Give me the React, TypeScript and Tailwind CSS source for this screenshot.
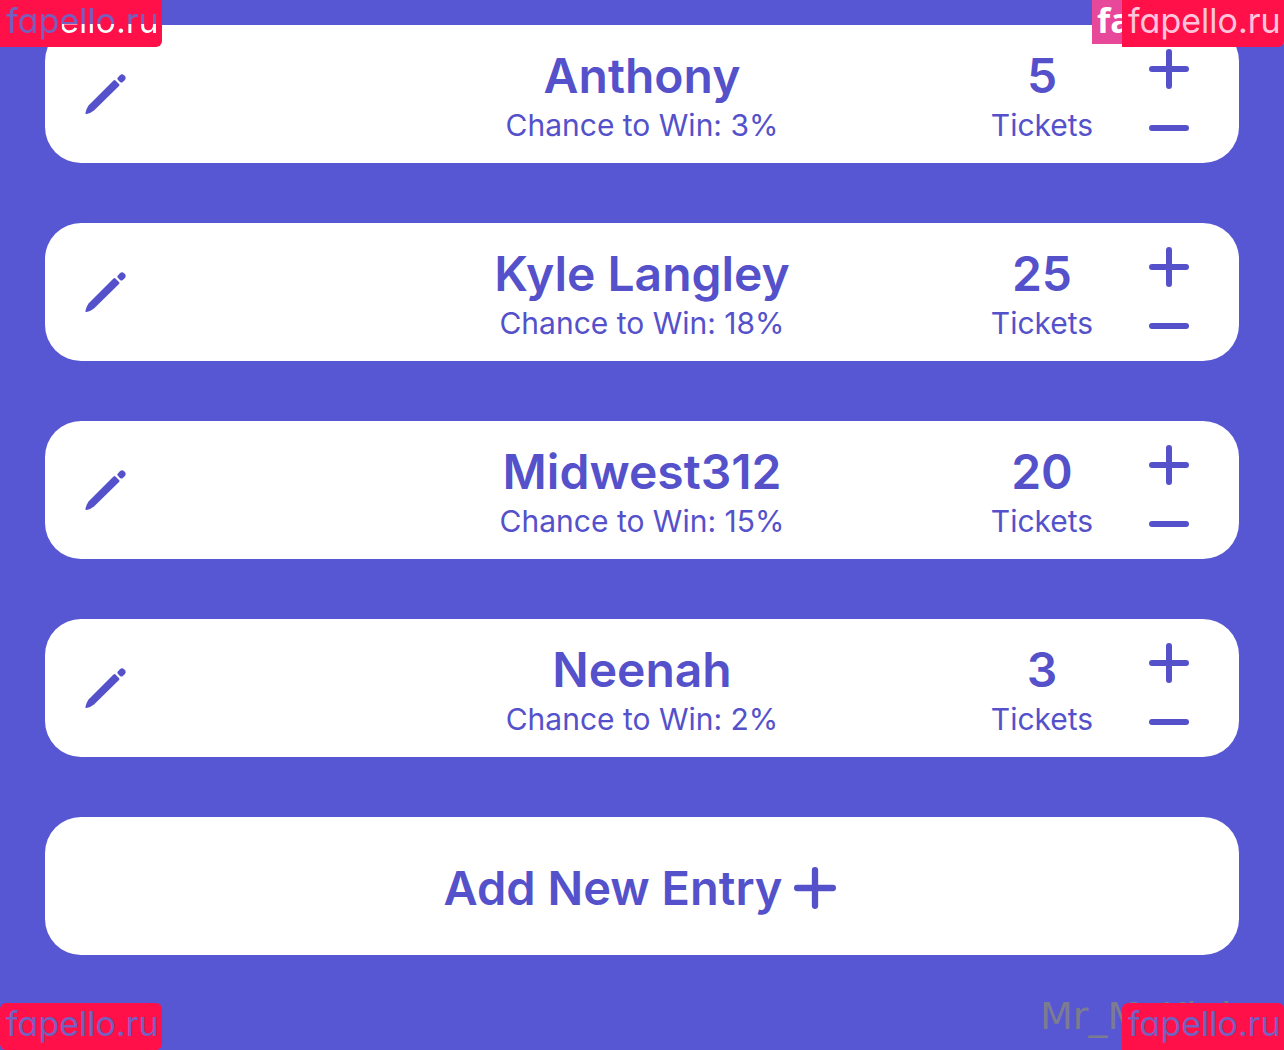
import type { ReactNode } from "react";

type Entry = {
  name: string;
  chance: number;
  tickets: number;
};

const entries: Entry[] = [
  { name: "Anthony", chance: 3, tickets: 5 },
  { name: "Kyle Langley", chance: 18, tickets: 25 },
  { name: "Midwest312", chance: 15, tickets: 20 },
  { name: "Neenah", chance: 2, tickets: 3 },
];

function PencilIcon() {
  return (
    <svg viewBox="0 0 42 42" className="h-[42px] w-[42px]" fill="currentColor" aria-hidden="true">
      <path d="M1.500 41 Q0 41.200 .5 39.500 Q1.500 35.500 3.500 32.500 L28.500 7.500 Q29.500 6.500 30.500 7.500 L34 11 Q35 12 34 13 L9 37.500 Q6 40 1.500 41 Z" />
      <path d="M32.800 4.500 L35 2.200 Q37 .5 39 2.200 L40 3.200 Q41.500 5 40 7 L37.800 9 Q36.500 10 35 9 L32.800 6.800 Q31.800 5.600 32.800 4.500 Z" />
    </svg>
  );
}

function PlusIcon({ className }: { className: string }) {
  return (
    <svg viewBox="0 0 40 40" className={className} fill="none" stroke="currentColor" strokeWidth="6" strokeLinecap="round" aria-hidden="true">
      <path d="M20 3 V37 M3 20 H37" />
    </svg>
  );
}

function MinusIcon() {
  return (
    <svg viewBox="0 0 40 6" className="h-[6px] w-10" fill="none" stroke="currentColor" strokeWidth="6" strokeLinecap="round" aria-hidden="true">
      <path d="M3 3 H37" />
    </svg>
  );
}

function EntryCard({ entry }: { entry: Entry }) {
  return (
    <li className="grid h-[138px] grid-cols-[1fr_auto_1fr] rounded-[36px] bg-white px-10">
      <button type="button" aria-label={`Edit ${entry.name}`} className="self-center justify-self-start">
        <PencilIcon />
      </button>

      <div className="flex flex-col items-center pt-5 text-center">
        <h2 className="text-[48px] leading-[62px] font-semibold">{entry.name}</h2>
        <p className="text-[30px] leading-9">Chance to Win: {entry.chance}%</p>
      </div>

      <div className="flex justify-end gap-12">
        <div className="flex w-[118px] flex-col items-center pt-5">
          <span className="text-[48px] leading-[62px] font-semibold">{entry.tickets}</span>
          <span className="text-[30px] leading-9">Tickets</span>
        </div>
        <div className="mr-[10px] flex flex-col pt-6">
          <button type="button" aria-label={`Add ticket for ${entry.name}`}>
            <PlusIcon className="h-10 w-10" />
          </button>
          <button type="button" aria-label={`Remove ticket for ${entry.name}`} className="mt-9">
            <MinusIcon />
          </button>
        </div>
      </div>
    </li>
  );
}

function Tag({ className, children }: { className: string; children: ReactNode }) {
  return (
    <div className={`absolute h-[47px] w-[162px] bg-[#ff1048] pl-[6px] text-[34px] leading-[42px] whitespace-nowrap [font-feature-settings:'cv11'] ${className}`}>
      {children}
    </div>
  );
}

export default function App() {
  return (
    <div className="relative overflow-hidden bg-[#5756d3] font-[Inter,sans-serif] text-[#5451cb]">
      <main className="px-[45px] pt-[25px] pb-[95px]">
        <ul className="flex flex-col gap-[60px]">
          {entries.map((entry) => (
            <EntryCard key={entry.name} entry={entry} />
          ))}
        </ul>
        <button type="button" className="mt-[60px] flex h-[138px] w-full items-center justify-center gap-3 rounded-[36px] bg-white pt-1 pr-1 text-[47px] font-semibold">
          Add New Entry
          <PlusIcon className="h-[42px] w-[42px]" />
        </button>
      </main>

      <Tag className="top-0 left-0 rounded-br-md">
        <span className="bg-[#7560c0] bg-[linear-gradient(#fff,#fff)] bg-[position:56px_24px] bg-no-repeat bg-clip-text text-transparent">fapello.ru</span>
      </Tag>
      <div className="absolute top-0 right-0 h-[44px] w-[192px] bg-[#e8489a] pl-[5px] font-['Open_Sans',sans-serif] text-[34px] leading-10 font-bold text-white">fa</div>
      <Tag className="top-0 right-0 rounded-br-md text-[#ffc4dc]">fapello.ru</Tag>
      <div className="absolute right-0 bottom-0 h-[56px] w-[244px] font-['DejaVu_Sans',sans-serif] text-[38px] leading-[44px] whitespace-nowrap text-[#7c7c90]">Mr_McKinley</div>
      <Tag className="bottom-0 left-0 rounded-md text-[#7560c0]">fapello.ru</Tag>
      <Tag className="right-0 bottom-0 rounded-t-md text-[#7560c0]">fapello.ru</Tag>
    </div>
  );
}
